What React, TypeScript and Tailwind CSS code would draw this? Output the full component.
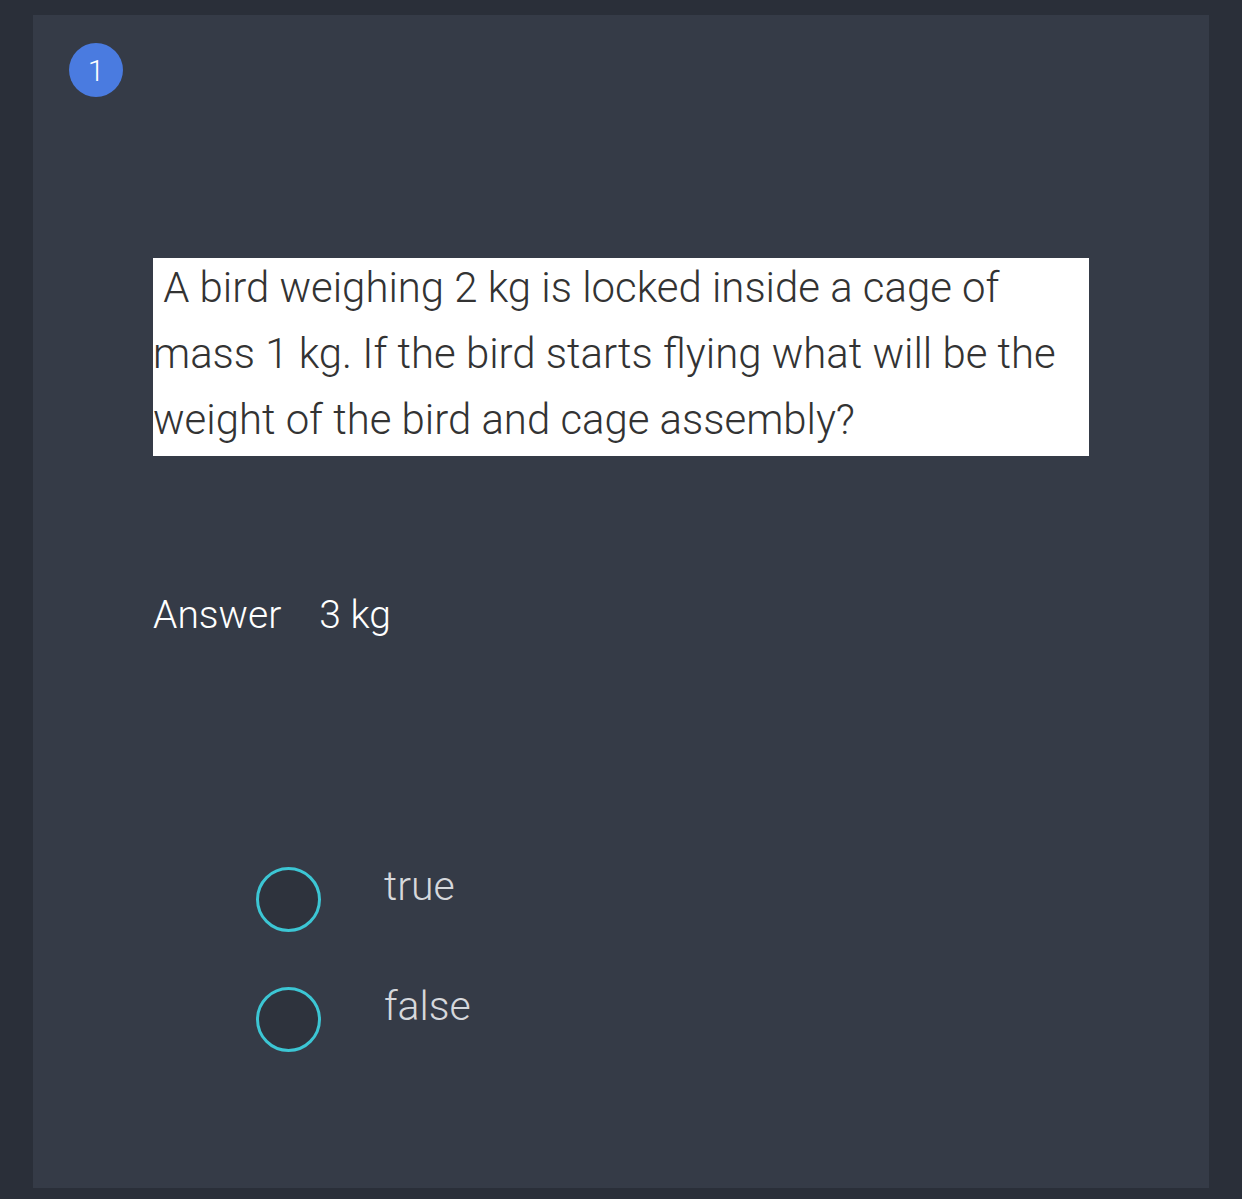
export default function App() {
  const options = ['true', 'false'];
  return (
    <div className="min-h-[1199px] bg-[#2a2f39] px-[33px] pt-[15px] pb-[11px] font-['Roboto','Liberation_Sans',sans-serif] font-light">
      <div className="h-[1173px] bg-[#353b47] pl-[36px] pt-[28px]">
        <div className="flex h-[54px] w-[54px] items-center justify-center rounded-full bg-[#4a7be0] text-[30px] text-white">
          1
        </div>
        <div className="flow-root mt-[161px] ml-[84px] w-[936px] bg-white pb-[3px]">
          <p className="-mt-[3px] text-[41.9px] leading-[66px] text-[#333]">
            &nbsp;A bird weighing 2 kg is locked inside a cage of mass 1 kg. If the bird starts flying what will be the weight of the bird and cage assembly?
          </p>
        </div>
        <div className="mt-[134px] ml-[84px] flex gap-[38px] text-[39px] leading-[50px] text-white">
          <span>Answer</span>
          <span>3 kg</span>
        </div>
        <div className="mt-[227px] ml-[187px] flex flex-col gap-[55px]">
          {options.map((o) => (
            <div key={o} className="flex items-start">
              <div className="h-[65px] w-[65px] rounded-full border-[3px] border-[#3cc6d4] bg-[#2e333d]" />
              <span className="ml-[63px] -mt-[10px] text-[41px] leading-[58px] text-[#d6d8dc]">{o}</span>
            </div>
          ))}
        </div>
      </div>
    </div>
  );
}
